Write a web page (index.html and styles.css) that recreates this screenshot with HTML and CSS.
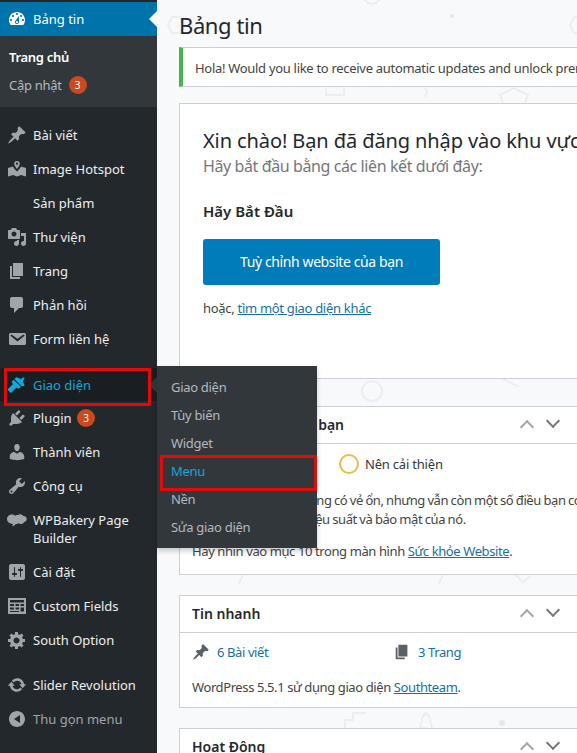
FILE: index.html
```html
<!DOCTYPE html>
<html lang="vi">
<head>
    <meta charset="UTF-8">
    <meta name="viewport" content="width=device-width, initial-scale=1.0">
    <title>Bảng tin</title>
    <link rel="stylesheet" href="styles.css">
</head>
<body>
    <nav class="sidebar">
        <ul class="menu">
            <li class="item current">
                <svg class="ico" viewBox="0 0 20 20"><path d="M3.76 16h12.48c1.1-1.37 1.76-3.11 1.76-5 0-4.42-3.58-8-8-8s-8 3.58-8 8c0 1.89.66 3.63 1.76 5zM10 4c.55 0 1 .45 1 1s-.45 1-1 1-1-.45-1-1 .45-1 1-1zM6 6c.55 0 1 .45 1 1s-.45 1-1 1-1-.45-1-1 .45-1 1-1zm8 0c.55 0 1 .45 1 1s-.45 1-1 1-1-.45-1-1 .45-1 1-1zm-5.37 5.55L12 7v6c0 1.1-.9 2-2 2s-2-.9-2-2c0-.57.24-1.08.63-1.45zM4 10c.55 0 1 .45 1 1s-.45 1-1 1-1-.45-1-1 .45-1 1-1zm12 0c.55 0 1 .45 1 1s-.45 1-1 1-1-.45-1-1 .45-1 1-1zm-5 3c0-.55-.45-1-1-1s-1 .45-1 1 .45 1 1 1 1-.45 1-1z" fill-rule="evenodd"/></svg>
                <span>Bảng tin</span>
            </li>
        </ul>
        <ul class="submenu">
            <li class="sub-item strong">Trang chủ</li>
            <li class="sub-item">Cập nhật <b class="badge">3</b></li>
        </ul>
        <ul class="menu group">
            <li class="item">
                <svg class="ico" viewBox="0 0 20 20"><path d="M10.44 3.02l1.82-1.82 6.36 6.35-1.83 1.82c-1.05-.68-2.48-.57-3.41.36l-.75.75c-.92.93-1.04 2.35-.35 3.41l-1.83 1.82-2.41-2.41-2.8 2.79c-.42.42-3.38 2.71-3.8 2.29s1.86-3.39 2.28-3.81l2.79-2.79L4.1 9.36l1.83-1.82c1.05.69 2.48.57 3.4-.36l.75-.75c.93-.92 1.05-2.35.36-3.41z"/></svg>
                <span>Bài viết</span>
            </li>
            <li class="item">
                <svg class="ico" viewBox="0 0 20 20"><path d="M10 2a2.800 2.800 0 0 1 2.800 2.800c0 1.900-2.800 5.200-2.800 5.200S7.200 6.700 7.200 4.800A2.800 2.800 0 0 1 10 2zM10 3.600a1.100 1.100 0 1 0 0 2.200 1.100 1.100 0 0 0 0-2.200zM1 9l5-1.500c.7 1.600 2.200 3.500 4 5 1.800-1.500 3.300-3.400 4-5L19 9v8.500l-5-1.500-4 1.500L6 16l-5 1.500z" fill-rule="evenodd"/></svg>
                <span>Image Hotspot</span>
            </li>
            <li class="item"><span class="ico"></span><span>Sản phẩm</span></li>
            <li class="item">
                <svg class="ico" viewBox="0 0 20 20"><path d="M13 11V4c0-.55-.45-1-1-1h-1.670L9 1H5L3.670 3H2c-.55 0-1 .45-1 1v7c0 .55.45 1 1 1h10c.55 0 1-.45 1-1zM7 4.500c1.380 0 2.500 1.120 2.500 2.500S8.380 9.500 7 9.500 4.500 8.380 4.500 7 5.620 4.500 7 4.500zM14 6h5v10.500c0 1.380-1.120 2.500-2.500 2.500S14 17.880 14 16.500s1.120-2.500 2.500-2.500c.17 0 .34.02.5.05V9h-3V6zm-4 8.050V13h2v3.500c0 1.380-1.120 2.500-2.500 2.500S7 17.880 7 16.500 8.120 14 9.500 14c.17 0 .34.02.5.05z"/></svg>
                <span>Thư viện</span>
            </li>
            <li class="item">
                <svg class="ico" viewBox="0 0 20 20"><path d="M6 15V2h10v13H6zm-1 1h8v2H3V5h2v11z"/></svg>
                <span>Trang</span>
            </li>
            <li class="item">
                <svg class="ico" viewBox="0 0 20 20"><path d="M5 2h9c1.100 0 2 .9 2 2v7c0 1.100-.9 2-2 2h-2l-5 5v-5H5c-1.100 0-2-.9-2-2V4c0-1.100.9-2 2-2z"/></svg>
                <span>Phản hồi</span>
            </li>
            <li class="item">
                <svg class="ico" viewBox="0 0 20 20"><path d="M3.870 4h13.250C18.370 4 19 4.590 19 5.790v8.420c0 1.190-.63 1.790-1.880 1.790H3.870c-1.250 0-1.880-.6-1.880-1.790V5.790c0-1.200.63-1.790 1.880-1.790zm6.620 8.600l6.740-5.530c.24-.2.43-.66.13-1.070-.29-.41-.82-.42-1.170-.17l-5.700 3.860L4.800 5.830c-.35-.25-.88-.24-1.170.17-.3.41-.11.87.13 1.070z"/></svg>
                <span>Form liên hệ</span>
            </li>
        </ul>
        <ul class="menu group">
            <li class="item open">
                <svg class="ico" viewBox="0 0 20 20"><path d="M14.480 11.060L7.410 3.990l1.500-1.500c.5-.56 2.300.47 3.540 1.060.98.47 1.130.37 2.060-.14l2.040-1.150 1.060 1.060-1.150 2.040c-.51.93-.61 1.080-.14 2.060.59 1.240 1.620 3.040 1.060 3.540zM6.700 4.700l7.070 7.070-1.410 1.410c-.59.59-1.530.59-2.120 0l-.71-.7-4.950 4.950c-.39.39-1.020.39-1.410 0L1.050 15.300c-.39-.39-.39-1.020 0-1.410L6 8.940l-.71-.71c-.59-.59-.59-1.530 0-2.120z"/></svg>
                <span>Giao diện</span>
                <ul class="flyout">
                    <li>Giao diện</li>
                    <li>Tùy biến</li>
                    <li>Widget</li>
                    <li class="active">Menu</li>
                    <li>Nền</li>
                    <li>Sửa giao diện</li>
                </ul>
            </li>
            <li class="item">
                <svg class="ico" viewBox="0 0 20 20"><path d="M13.110 4.360L9.870 7.600 8 5.730l3.240-3.240c.35-.34 1.050-.2 1.560.32.52.51.66 1.210.31 1.550zm-8 1.770l.91-1.120 9.010 9.010-1.190.84c-.71.71-2.630 1.160-3.820 1.160H6.140L4.900 17.260c-.59.59-1.540.59-2.120 0-.59-.58-.59-1.530 0-2.120l1.240-1.240v-3.880c0-1.130.4-3.190 1.090-3.890zm7.260 3.970l3.240-3.240c.34-.35 1.040-.21 1.550.31.52.51.66 1.210.31 1.550l-3.240 3.250z"/></svg>
                <span>Plugin <b class="badge">3</b></span>
            </li>
            <li class="item">
                <svg class="ico" viewBox="0 0 20 20"><path d="M10 9.250c-2.270 0-2.730-3.440-2.730-3.440C7 4.020 7.820 2 9.970 2c2.160 0 2.980 2.020 2.710 3.810 0 0-.41 3.440-2.680 3.440zm0 2.570L12.720 10c2.390 0 4.520 2.330 4.520 4.530v2.490s-3.650 1.130-7.240 1.130c-3.650 0-7.240-1.130-7.240-1.130v-2.490c0-2.250 1.940-4.480 4.470-4.480z"/></svg>
                <span>Thành viên</span>
            </li>
            <li class="item">
                <svg class="ico" viewBox="0 0 20 20"><path d="M16.680 9.770c-1.340 1.340-3.300 1.670-4.950.99l-5.410 6.520c-.99.99-2.590.99-3.580 0s-.99-2.590 0-3.570l6.520-5.420c-.68-1.650-.35-3.610.99-4.950 1.280-1.280 3.120-1.620 4.720-1.060l-2.890 2.890 2.820 2.820 2.860-2.870c.53 1.580.18 3.390-1.080 4.650zM3.810 16.210c.4.39 1.040.39 1.430 0 .4-.4.4-1.040 0-1.430-.39-.4-1.030-.4-1.430 0-.39.39-.39 1.030 0 1.430z"/></svg>
                <span>Công cụ</span>
            </li>
            <li class="item">
                <svg class="ico" viewBox="0 0 20 20"><path transform="translate(0 1.500)" d="M5 3c1.300 0 2.300.5 3 1.200.8-.5 1.700-.7 2.600-.5 1-.8 2.300-1 3.500-.7 1 .3 1.800.8 2.300 1.500 1.800 0 3.300 1.300 3.300 3.100 0 1.600-1.100 2.900-2.700 3.100-.6 1.100-1.800 1.800-3.100 1.800-.9 0-1.700-.3-2.300-.7-.7.6-1.800.9-2.800.7-.8 1-2 2.300-3.600 2.300.4-.7.7-1.600.7-2.400C2.500 12.200 0 10.200 0 7.500 0 5 2.300 3 5 3z"/></svg>
                <span>WPBakery Page Builder</span>
            </li>
            <li class="item">
                <svg class="ico" viewBox="0 0 20 20"><path d="M18 16V4c0-1.100-.9-2-2-2H4c-1.100 0-2 .9-2 2v12c0 1.100.9 2 2 2h12c1.100 0 2-.9 2-2zM8 11h1c.55 0 1 .45 1 1s-.45 1-1 1H8v1.500c0 .28-.22.5-.5.5s-.5-.22-.5-.5V13H6c-.55 0-1-.45-1-1s.45-1 1-1h1V5.500c0-.28.22-.5.5-.5s.5.22.5.5V11zm5-2h-1c-.55 0-1-.45-1-1s.45-1 1-1h1V5.500c0-.28.22-.5.5-.5s.5.22.5.5V7h1c.55 0 1 .45 1 1s-.45 1-1 1h-1v5.500c0 .28-.22.5-.5.5s-.5-.22-.5-.5V9z"/></svg>
                <span>Cài đặt</span>
            </li>
            <li class="item">
                <svg class="ico" viewBox="0 0 20 20"><path d="M1 2h18v16H1zm2 2v2.500h14V4zm0 4v2h4V8zm5.500 0v2h3.500V8zm5 0v2H17V8zM3 11.500v2h4v-2zm5.500 0v2h3.500v-2zm5 0v4H17v-4zM3 15v1h9v-1z" fill-rule="evenodd"/></svg>
                <span>Custom Fields</span>
            </li>
            <li class="item">
                <svg class="ico" viewBox="0 0 20 20"><path d="M18 12h-2.180c-.17.7-.44 1.350-.81 1.930l1.540 1.540-2.100 2.100-1.540-1.540c-.58.36-1.230.63-1.910.79V19H8v-2.180c-.68-.16-1.330-.43-1.910-.79l-1.540 1.540-2.120-2.120 1.540-1.540c-.36-.58-.63-1.230-.79-1.910H1V9.030h2.170c.16-.7.44-1.350.8-1.940L2.430 5.550l2.100-2.100 1.540 1.540c.58-.37 1.240-.64 1.930-.81V2h3v2.180c.68.16 1.330.43 1.910.79l1.540-1.540 2.120 2.120-1.540 1.540c.36.59.64 1.240.8 1.940H18V12zm-8.500 1.500c1.660 0 3-1.340 3-3s-1.340-3-3-3-3 1.340-3 3 1.340 3 3 3z"/></svg>
                <span>South Option</span>
            </li>
        </ul>
        <ul class="menu group tail">
            <li class="item">
                <svg class="ico" viewBox="0 0 20 20"><path d="M10.200 3.280c3.530 0 6.430 2.610 6.920 6h2.080l-3.500 4-3.500-4h2.320c-.45-1.970-2.210-3.440-4.320-3.440-1.450 0-2.730.71-3.540 1.780L4.950 5.660C6.230 4.200 8.110 3.280 10.200 3.280zm-.4 13.440c-3.520 0-6.430-2.610-6.920-6H.8l3.500-4c1.170 1.330 2.330 2.670 3.500 4H5.480c.45 1.970 2.210 3.440 4.320 3.440 1.450 0 2.730-.71 3.540-1.780l1.710 1.950c-1.280 1.460-3.150 2.390-5.250 2.390z"/></svg>
                <span>Slider Revolution</span>
            </li>
            <li class="item collapse">
                <svg class="ico" viewBox="0 0 20 20"><path d="M18 10c0-4.420-3.580-8-8-8s-8 3.580-8 8 3.580 8 8 8 8-3.580 8-8zm-5-4v8l-6-4z"/></svg>
                <span>Thu gọn menu</span>
            </li>
        </ul>
    </nav>

    <main class="content">
        <!-- pale shapes of the page background -->
        <svg class="pattern" width="420" height="753" viewBox="157 0 420 753">
            <path d="M172 17l8 0 5 8-5 8-8 0-4-8zM574 17l8 0 4 8-4 8-8 0-4-8z"/>
            <circle cx="372" cy="-4" r="8"/>
            <circle class="dot" cx="452" cy="16" r="2"/>
            <path d="M326 88v7h18v-7M425 88l2 4-2 5M503 103l-3-8 14-7 14 7-3 8"/>
            <circle cx="372" cy="391" r="10"/>
            <path d="M501 378l18 9M243 574l-4 10M443 574l-4 10M515 574l8 8 8-6"/>
            <path d="M345 728v-8h8v-7h13M427 728l-7 0 3-12 3-3 3 3 3 12"/>
            <circle class="dot" cx="502" cy="723" r="3"/>
        </svg>

        <h1 class="page-title">Bảng tin</h1>

        <div class="notice">Hola! Would you like to receive automatic updates and unlock premium support and more features?</div>

        <section class="welcome">
            <h2>Xin chào! Bạn đã đăng nhập vào khu vực quản trị!</h2>
            <p class="about">Hãy bắt đầu bằng các liên kết dưới đây:</p>
            <h3>Hãy Bắt Đầu</h3>
            <a class="button-hero">Tuỳ chỉnh website của bạn</a>
            <p class="small">hoặc, <a class="link">tìm một giao diện khác</a></p>
        </section>

        <section class="box health">
            <header class="box-head">
                <h2>Sức khỏe web của bạn</h2>
                <div class="handles">
                    <span class="handle up"></span>
                    <span class="handle down"></span>
                </div>
            </header>
            <div class="box-body">
                <div class="status"><i class="ring"></i>Nên cải thiện</div>
                <p class="health-text">Trang web của bạn đang có vẻ ổn, nhưng vẫn còn một số điều bạn có<br>thể làm để cải thiện hiệu suất và bảo mật của nó.</p>
                <p>Hãy nhìn vào mục 10 trong màn hình <a class="link">Sức khỏe Website</a>.</p>
            </div>
        </section>

        <section class="box glance">
            <header class="box-head">
                <h2>Tin nhanh</h2>
                <div class="handles">
                    <span class="handle up"></span>
                    <span class="handle down"></span>
                </div>
            </header>
            <div class="box-body">
                <div class="counts">
                    <a class="count">
                        <svg viewBox="0 0 20 20"><path d="M10.440 3.020l1.820-1.820 6.360 6.350-1.830 1.820c-1.050-.68-2.480-.57-3.410.36l-.75.75c-.92.93-1.040 2.350-.35 3.410l-1.830 1.820-2.410-2.410-2.800 2.790c-.42.42-3.380 2.710-3.800 2.290s1.860-3.390 2.280-3.810l2.790-2.790L4.100 9.360l1.830-1.820c1.050.69 2.480.57 3.400-.36l.75-.75c.93-.92 1.050-2.350.36-3.410z"/></svg>
                        6 Bài viết
                    </a>
                    <a class="count">
                        <svg viewBox="0 0 20 20"><path d="M6 15V2h10v13H6zm-1 1h8v2H3V5h2v11z"/></svg>
                        3 Trang
                    </a>
                </div>
                <p>WordPress 5.5.1 sử dụng giao diện <a class="link">Southteam</a>.</p>
            </div>
        </section>

        <section class="box">
            <header class="box-head">
                <h2>Hoạt Động</h2>
                <div class="handles">
                    <span class="handle up"></span>
                    <span class="handle down"></span>
                </div>
            </header>
        </section>
    </main>
</body>
</html>
```

FILE: styles.css
```css
*, *::before, *::after {
    box-sizing: border-box;
}

html, body {
    height: 753px;
}

body {
    display: flex;
    margin: 0;
    overflow: hidden;
    font-family: "Noto Sans", Arial, sans-serif;
    font-size: 13px;
    line-height: 18px;
    color: #444;
    background-color: #f8f9fb;
}

ul {
    list-style: none;
    margin: 0;
    padding: 0;
}

/* sidebar */
.sidebar {
    flex: 0 0 157px;
    height: 753px;
    padding-top: 2px;
    background-color: #23282d;
    color: #eee;
    position: relative;
    z-index: 2;
}

.group {
    margin-top: 11px;
}

.group + .group {
    margin-top: 12px;
}

.group.tail {
    margin-top: 11px;
}

.item {
    display: flex;
    position: relative;
    padding: 8px 4px 8px 0;
}

.ico {
    flex: 0 0 20px;
    width: 20px;
    height: 20px;
    margin: -1px 6px -1px 7px;
    fill: #a0a5aa;
}

.current {
    background-color: #0073aa;
    color: #fff;
}

.current .ico {
    fill: #fff;
}

.current::after {
    content: "";
    position: absolute;
    right: 0;
    top: 9px;
    border: 8px solid transparent;
    border-right-color: #f8f9fb;
    border-left-width: 0;
}

.submenu {
    padding: 7px 0 8px;
    background-color: #32373c;
    color: #b4b9be;
}

.sub-item {
    display: flex;
    align-items: center;
    gap: 5px;
    height: 28px;
    padding-left: 9px;
    letter-spacing: -0.3px;
}

.strong {
    color: #fff;
    font-weight: 600;
}

.badge {
    display: inline-block;
    width: 18px;
    height: 18px;
    margin-left: 2px;
    border-radius: 50%;
    background-color: #ca4a1f;
    color: #fff;
    font-size: 10px;
    font-weight: 400;
    line-height: 18px;
    text-align: center;
    vertical-align: top;
}

.open {
    height: 33px;
    background-color: #191e23;
    color: #10a9d8;
}

.open .ico {
    fill: #10a9d8;
}

/* red marks drawn over the screenshot */
.open::after, .flyout .active::after {
    content: "";
    position: absolute;
    border: 3px solid #e00b0b;
    pointer-events: none;
}

.open::after {
    left: 4px;
    top: 0;
    width: 147px;
    height: 38px;
}

.open::before {
    content: "";
    position: absolute;
    right: 0;
    top: 9px;
    border: 8px solid transparent;
    border-right-color: #32373c;
    border-left-width: 0;
}

.collapse {
    color: #a0a5aa;
}

.flyout {
    position: absolute;
    left: 157px;
    top: -2px;
    width: 160px;
    padding: 7px 0;
    background-color: #32373c;
    color: #b4b9be;
    letter-spacing: -0.3px;
    box-shadow: 0 3px 5px rgba(0, 0, 0, 0.2);
}

.flyout li {
    position: relative;
    height: 28px;
    padding: 5px 14px;
}

.flyout .active {
    color: #10a9d8;
}

.flyout .active::after {
    left: 3px;
    top: -2px;
    width: 157px;
    height: 36px;
}

/* main column */
.content {
    flex: 0 0 451px;
    min-width: 0;
    position: relative;
    padding: 10px 0 0 22px;
    color: #444;
    letter-spacing: -0.3px;
}

.pattern {
    position: absolute;
    left: 0;
    top: 0;
    overflow: visible;
    fill: none;
    stroke: #eceef1;
    stroke-width: 2;
}

.pattern .dot {
    fill: #e6e8ec;
    stroke: none;
}

.page-title {
    position: relative;
    margin: 0 0 6px;
    font-size: 22px;
    font-weight: 400;
    line-height: 31px;
    letter-spacing: -0.4px;
    color: #23282d;
}

.notice {
    position: relative;
    height: 40px;
    padding: 11px 12px;
    background-color: #fff;
    border: 1px solid #ccd0d4;
    border-left: 4px solid #46b450;
    white-space: nowrap;
    overflow: hidden;
}

.welcome {
    position: relative;
    height: 276px;
    margin-top: 16px;
    padding: 23px 23px 0;
    background-color: #fff;
    border: 1px solid #ccd0d4;
    overflow: hidden;
}

.welcome h2 {
    margin: 0;
    font-size: 20px;
    font-weight: 400;
    line-height: 28px;
    letter-spacing: -0.1px;
    color: #23282d;
    white-space: nowrap;
}

.about {
    margin: 0;
    font-size: 16px;
    line-height: 22px;
    letter-spacing: -0.4px;
    color: #72777c;
}

.welcome h3 {
    margin: 24px 0 18px;
    font-size: 15px;
    font-weight: 600;
    line-height: 20px;
    letter-spacing: 0;
    color: #23282d;
}

.button-hero {
    display: block;
    width: 237px;
    height: 46px;
    background-color: #007cba;
    border-radius: 3px;
    color: #fff;
    font-size: 14px;
    line-height: 46px;
    letter-spacing: -0.4px;
    text-align: center;
}

.small {
    margin: 14px 0 0;
}

.link {
    color: #16709f;
    text-decoration: underline;
}

.box {
    position: relative;
    margin-top: 20px;
    background-color: #fff;
    border: 1px solid #ccd0d4;
}

.health {
    margin-top: 27px;
    height: 169px;
}

.box-head {
    display: flex;
    justify-content: space-between;
    align-items: center;
    height: 37px;
    padding-left: 12px;
    border-bottom: 1px solid #ccd0d4;
}

.box-head h2 {
    margin: 0;
    font-size: 14px;
    font-weight: 600;
    letter-spacing: 0;
    color: #23282d;
}

.handles {
    display: flex;
    gap: 16px;
    padding-right: 49px;
}

/* chevrons, a rotated square with two borders */
.handle {
    width: 10px;
    height: 10px;
    border-style: solid;
    border-width: 2px 2px 0 0;
}

.up {
    margin-top: 4px;
    border-color: #a0a5aa;
    transform: rotate(-45deg);
}

.down {
    margin-top: -2px;
    border-color: #72777c;
    transform: rotate(135deg);
}

.box-body {
    padding: 0 12px;
    letter-spacing: -0.4px;
}

.box-body p {
    margin: 0;
}

.status {
    display: flex;
    align-items: center;
    gap: 6px;
    height: 20px;
    margin: 10px 0 0 147px;
    letter-spacing: -0.2px;
    color: #32373c;
}

.ring {
    width: 20px;
    height: 20px;
    border: 2px solid #f0b849;
    border-radius: 50%;
}

.box-body .health-text {
    margin: 17px 0 13px;
    line-height: 19px;
    word-spacing: -0.5px;
    white-space: nowrap;
}

.counts {
    display: flex;
    padding-top: 9px;
}

.count {
    display: flex;
    align-items: center;
    gap: 7px;
    width: 201px;
    height: 20px;
    color: #16709f;
}

.count svg {
    width: 18px;
    height: 18px;
    fill: #5a6068;
}

.glance {
    height: 113px;
}

.glance p {
    margin-top: 16px;
}
```
